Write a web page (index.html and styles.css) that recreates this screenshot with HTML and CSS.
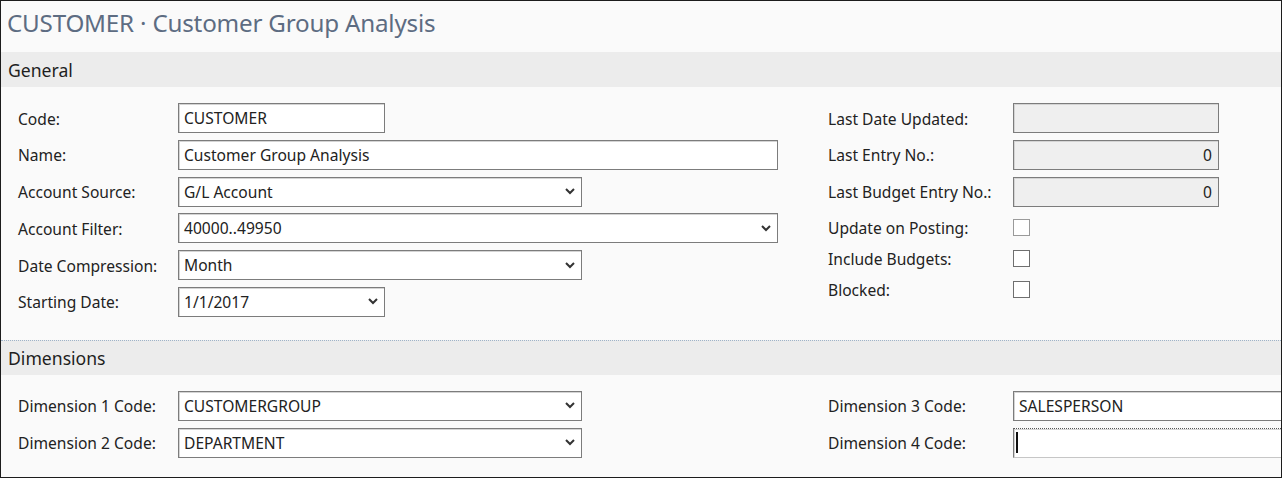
FILE: index.html
```html
<!DOCTYPE html>
<html>
<head>
<meta charset="utf-8">
<link rel="stylesheet" href="styles.css">
</head>
<body>
<div class="frame">
  <h1 class="title">CUSTOMER · Customer Group Analysis</h1>

  <div class="band">General</div>
  <div class="section">
    <div class="col left">
      <div class="row"><span class="label">Code:</span><div class="field w-s">CUSTOMER</div></div>
      <div class="row"><span class="label">Name:</span><div class="field w-l">Customer Group Analysis</div></div>
      <div class="row"><span class="label">Account Source:</span><div class="field w-m drop">G/L Account<svg class="chev" width="10" height="7" viewBox="0 0 10 7"><polyline points="1,1 5,5 9,1" fill="none" stroke="#333" stroke-width="2"/></svg></div></div>
      <div class="row"><span class="label">Account Filter:</span><div class="field w-l drop">40000..49950<svg class="chev" width="10" height="7" viewBox="0 0 10 7"><polyline points="1,1 5,5 9,1" fill="none" stroke="#333" stroke-width="2"/></svg></div></div>
      <div class="row"><span class="label">Date Compression:</span><div class="field w-m drop">Month<svg class="chev" width="10" height="7" viewBox="0 0 10 7"><polyline points="1,1 5,5 9,1" fill="none" stroke="#333" stroke-width="2"/></svg></div></div>
      <div class="row"><span class="label">Starting Date:</span><div class="field w-s drop">1/1/2017<svg class="chev" width="10" height="7" viewBox="0 0 10 7"><polyline points="1,1 5,5 9,1" fill="none" stroke="#333" stroke-width="2"/></svg></div></div>
    </div>
    <div class="col right">
      <div class="row"><span class="label r">Last Date Updated:</span><div class="field ro"></div></div>
      <div class="row"><span class="label r">Last Entry No.:</span><div class="field ro num">0</div></div>
      <div class="row"><span class="label r">Last Budget Entry No.:</span><div class="field ro num">0</div></div>
      <div class="checks">
        <div class="crow"><span class="label r">Update on Posting:</span><span class="box light"></span></div>
        <div class="crow"><span class="label r">Include Budgets:</span><span class="box"></span></div>
        <div class="crow"><span class="label r">Blocked:</span><span class="box"></span></div>
      </div>
    </div>
  </div>

  <div class="band band2">Dimensions</div>
  <div class="section">
    <div class="col left">
      <div class="row"><span class="label">Dimension 1 Code:</span><div class="field w-m drop">CUSTOMERGROUP<svg class="chev" width="10" height="7" viewBox="0 0 10 7"><polyline points="1,1 5,5 9,1" fill="none" stroke="#333" stroke-width="2"/></svg></div></div>
      <div class="row"><span class="label">Dimension 2 Code:</span><div class="field w-m drop">DEPARTMENT<svg class="chev" width="10" height="7" viewBox="0 0 10 7"><polyline points="1,1 5,5 9,1" fill="none" stroke="#333" stroke-width="2"/></svg></div></div>
    </div>
    <div class="col right">
      <div class="row"><span class="label r">Dimension 3 Code:</span><div class="field wide">SALESPERSON</div></div>
      <div class="row"><span class="label r">Dimension 4 Code:</span><div class="field wide focus"><span class="caret"></span></div></div>
    </div>
  </div>
</div>
</body>
</html>
```
FILE: styles.css
```css
html, body {
  margin: 0;
  padding: 0;
  background: #fff;
}
.frame {
  width: 1282px;
  height: 478px;
  box-sizing: border-box;
  border: 1px solid #1c1c1c;
  background: #fafafa;
  overflow: hidden;
  font-family: "Noto Sans", "Open Sans", sans-serif;
  font-size: 15.6px;
  color: #222;
}
.title {
  margin: 0;
  height: 51px;
  padding-left: 6px;
  box-sizing: border-box;
  font-weight: normal;
  font-size: 24.2px;
  line-height: 44px;
  color: #5d6c82;
  letter-spacing: -0.2px;
}
.band {
  height: 35px;
  background: #ececec;
  padding-left: 7px;
  line-height: 36px;
  font-size: 17.6px;
  color: #1e1e1e;
}
.band2 {
  border-top: 1px dotted #9fb3c8;
  height: 34px;
  line-height: 34px;
}
.section {
  display: flex;
  padding-top: 16px;
  padding-bottom: 23px;
}
.col {
  display: flex;
  flex-direction: column;
  gap: 6.8px;
}
.left {
  width: 810px;
  padding-left: 17px;
  flex: none;
}
.right {
  flex: 1;
  min-width: 0;
}
.row {
  display: flex;
  align-items: center;
  height: 30px;
}
.label {
  width: 160px;
  flex: none;
  white-space: nowrap;
  padding-top: 1px;
}
.label.r {
  width: 185px;
}
.field {
  box-sizing: border-box;
  height: 30px;
  border: 1px solid #7c7c7c;
  box-shadow: inset 1px 1px 0 #d4d4d4;
  background: #fff;
  display: flex;
  align-items: center;
  padding-left: 5px;
  padding-right: 6px;
  white-space: nowrap;
  flex: none;
}
.w-s { width: 207px; }
.w-m { width: 404px; }
.w-l { width: 600px; }
.drop { justify-content: space-between; }
.chev { flex: none; }
.ro {
  width: 206px;
  background: #efefef;
  justify-content: flex-end;
}
.wide {
  width: 300px;
}
.focus {
  border-bottom-color: #c6c6c6;
  border-top-style: dotted;
  border-top-color: #555;
}
.caret {
  width: 2px;
  height: 21px;
  background: #111;
  margin-left: -3px;
}
.checks {
  display: flex;
  flex-direction: column;
  gap: 7.3px;
  margin-top: 2px;
}
.crow {
  display: flex;
  align-items: center;
  height: 24px;
}
.box {
  width: 17px;
  height: 17px;
  box-sizing: border-box;
  border: 1px solid #6f6f6f;
  background: #fff;
}
.box.light {
  border-color: #9a9a9a;
}
```
